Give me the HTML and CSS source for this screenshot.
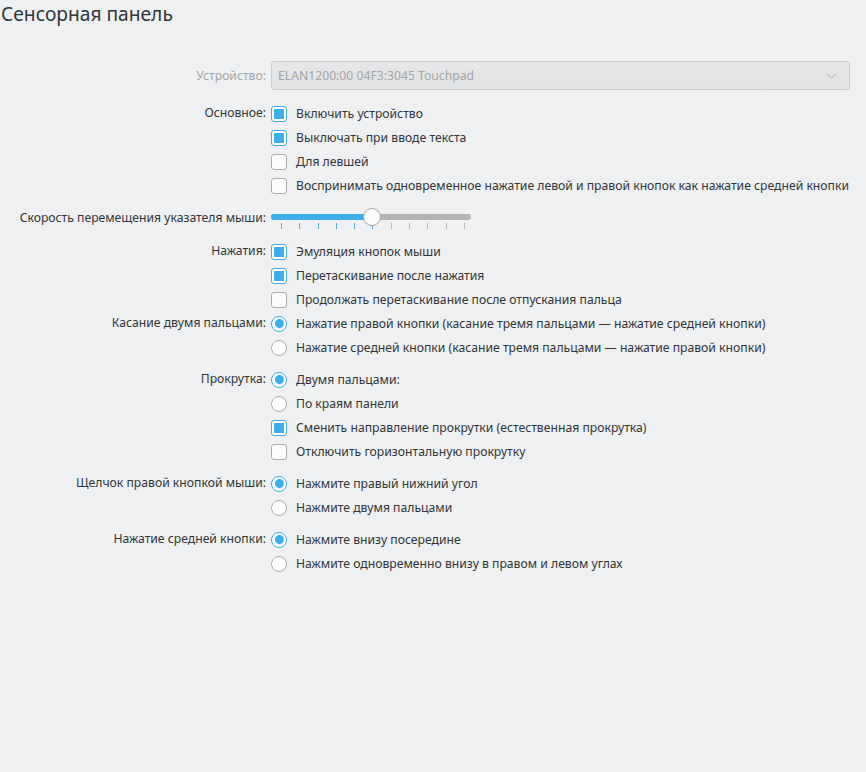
FILE: index.html
```html
<!DOCTYPE html>
<html lang="ru">
  <head>
    <meta charset="UTF-8" />
    <meta name="viewport" content="width=device-width, initial-scale=1.0" />
    <title>Сенсорная панель</title>
    <link rel="stylesheet" href="styles.css">
  </head>
  <body>
    <h1 class="title">Сенсорная панель</h1>

    <div class="form">
      <div class="field device">
        <span class="lbl disabled">Устройство:</span>
        <div class="combo">
          <span>ELAN1200:00 04F3:3045 Touchpad</span>
          <svg class="chevron" width="11" height="6" viewBox="0 0 11 6">
            <polyline points="0.5,0.5 5.5,5 10.5,0.5" fill="none" stroke="#a9abad" stroke-width="1" />
          </svg>
        </div>
      </div>

      <div class="field">
        <span class="lbl">Основное:</span>
        <div class="opts">
          <label class="opt"><span class="box checked"></span>Включить устройство</label>
          <label class="opt"><span class="box checked"></span>Выключать при вводе текста</label>
          <label class="opt"><span class="box"></span>Для левшей</label>
          <label class="opt"><span class="box"></span>Воспринимать одновременное нажатие левой и правой кнопок как нажатие средней кнопки</label>
        </div>
      </div>

      <div class="field speed">
        <span class="lbl">Скорость перемещения указателя мыши:</span>
        <div class="slider">
          <div class="rail">
            <div class="track"><div class="fill"></div></div>
            <div class="handle"></div>
          </div>
          <div class="ticks">
            <i class="on"></i><i class="on"></i><i class="on"></i><i class="on"></i><i class="on"></i><i class="on"></i>
            <i></i><i></i><i></i><i></i><i></i>
          </div>
        </div>
      </div>

      <div class="field">
        <span class="lbl">Нажатия:</span>
        <div class="opts">
          <label class="opt"><span class="box checked"></span>Эмуляция кнопок мыши</label>
          <label class="opt"><span class="box checked"></span>Перетаскивание после нажатия</label>
          <label class="opt"><span class="box"></span>Продолжать перетаскивание после отпускания пальца</label>
        </div>
      </div>

      <div class="field">
        <span class="lbl">Касание двумя пальцами:</span>
        <div class="opts">
          <label class="opt"><span class="radio checked"></span>Нажатие правой кнопки (касание тремя пальцами — нажатие средней кнопки)</label>
          <label class="opt"><span class="radio"></span>Нажатие средней кнопки (касание тремя пальцами — нажатие правой кнопки)</label>
        </div>
      </div>

      <div class="field sep">
        <span class="lbl">Прокрутка:</span>
        <div class="opts">
          <label class="opt"><span class="radio checked"></span>Двумя пальцами:</label>
          <label class="opt"><span class="radio"></span>По краям панели</label>
          <label class="opt"><span class="box checked"></span>Сменить направление прокрутки (естественная прокрутка)</label>
          <label class="opt"><span class="box"></span>Отключить горизонтальную прокрутку</label>
        </div>
      </div>

      <div class="field sep">
        <span class="lbl">Щелчок правой кнопкой мыши:</span>
        <div class="opts">
          <label class="opt"><span class="radio checked"></span>Нажмите правый нижний угол</label>
          <label class="opt"><span class="radio"></span>Нажмите двумя пальцами</label>
        </div>
      </div>

      <div class="field sep">
        <span class="lbl">Нажатие средней кнопки:</span>
        <div class="opts">
          <label class="opt"><span class="radio checked"></span>Нажмите внизу посередине</label>
          <label class="opt"><span class="radio"></span>Нажмите одновременно внизу в правом и левом углах</label>
        </div>
      </div>
    </div>
  </body>
</html>
```

FILE: styles.css
```css
* {
  margin: 0;
  padding: 0;
  box-sizing: border-box;
}
body {
  background: #eff0f1;
  color: #31363b;
  font-family: "Noto Sans", "DejaVu Sans", sans-serif;
  font-size: 12.2px;
  width: 866px;
  height: 772px;
  overflow: hidden;
}
.title {
  font-size: 19.2px;
  font-weight: 400;
  line-height: 28px;
  padding-left: 1px;
}
.form {
  margin-top: 33px;
}
.field {
  display: grid;
  grid-template-columns: 266px 1fr;
  column-gap: 5px;
}
.field.sep {
  margin-top: 8px;
}
.lbl {
  text-align: right;
  line-height: 24px;
  white-space: nowrap;
}
.lbl.disabled {
  color: #a4a6a8;
}

/* device combo */
.device {
  margin-bottom: 11px;
}
.device .lbl {
  line-height: 29px;
}
.combo {
  width: 579px;
  height: 29px;
  display: flex;
  align-items: center;
  justify-content: space-between;
  padding: 0 12px 0 6px;
  border: 1px solid #c9cbcd;
  border-radius: 3px;
  background: linear-gradient(#e6e7e8, #e1e2e4);
  color: #a4a6a8;
}

/* checkboxes and radios */
.opt {
  display: flex;
  align-items: center;
  height: 24px;
  white-space: nowrap;
}
.box,
.radio {
  flex: none;
  width: 16px;
  height: 16px;
  margin: 1px 9px 0 0;
  border: 1px solid #a9abad;
  background: #fcfcfc;
  display: flex;
  align-items: center;
  justify-content: center;
}
.box {
  border-radius: 3px;
}
.radio {
  border-radius: 50%;
}
.box.checked,
.radio.checked {
  border-color: #3daee9;
  background: #fff;
}
.box.checked::after {
  content: "";
  width: 10px;
  height: 10px;
  border-radius: 1px;
  background: #3daee9;
}
.radio.checked::after {
  content: "";
  width: 9px;
  height: 9px;
  border-radius: 50%;
  background: #3daee9;
}

/* slider */
.speed {
  height: 42px;
}
.speed .lbl {
  padding-top: 9px;
}
.slider {
  width: 200px;
  padding-top: 11px;
}
.rail {
  position: relative;
  height: 18px;
}
.track {
  position: absolute;
  left: 0;
  right: 0;
  top: 6px;
  height: 6px;
  border-radius: 3px;
  background: #b2b4b5;
  overflow: hidden;
}
.fill {
  width: 50%;
  height: 100%;
  background: #3daee9;
}
.handle {
  position: absolute;
  left: 92px;
  top: 0;
  width: 18px;
  height: 18px;
  border-radius: 50%;
  border: 1px solid #a4a6a8;
  background: #fcfcfc;
}
.ticks {
  display: flex;
  justify-content: space-between;
  padding: 0 6px 0 10px;
  margin-top: -3px;
}
.ticks i {
  width: 1px;
  height: 6px;
  background: #b2b4b5;
}
.ticks i.on {
  background: #5aa9d6;
}
```
